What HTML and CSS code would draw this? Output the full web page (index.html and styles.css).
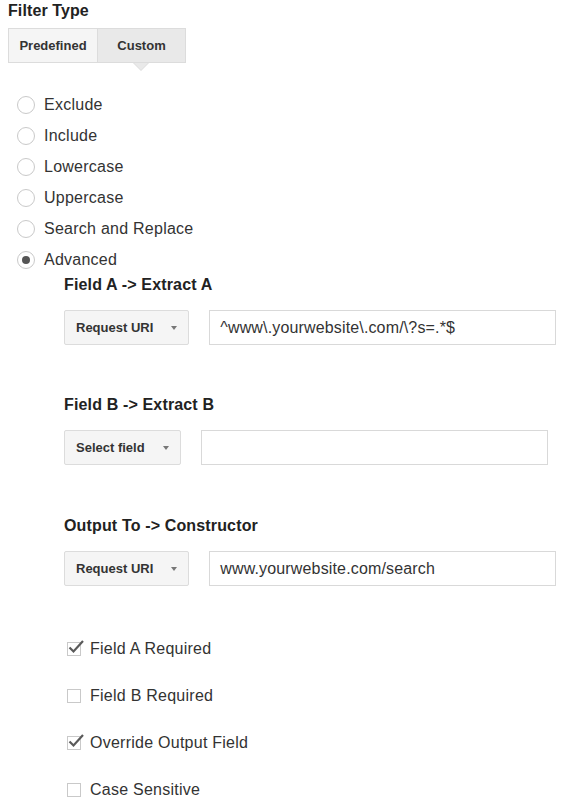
FILE: index.html
```html
<!DOCTYPE html>
<html>
<head>
<meta charset="utf-8">
<link rel="stylesheet" href="styles.css">
</head>
<body>
<div class="page">
  <div class="title">Filter Type</div>
  <div class="tabs">
    <div class="tab">Predefined</div>
    <div class="tab active">Custom</div>
  </div>
  <div class="radios">
    <div class="radio-row"><span class="radio"></span><span>Exclude</span></div>
    <div class="radio-row"><span class="radio"></span><span>Include</span></div>
    <div class="radio-row"><span class="radio"></span><span>Lowercase</span></div>
    <div class="radio-row"><span class="radio"></span><span>Uppercase</span></div>
    <div class="radio-row"><span class="radio"></span><span>Search and Replace</span></div>
    <div class="radio-row"><span class="radio checked"></span><span>Advanced</span></div>
  </div>
  <div class="advanced">
    <div class="heading">Field A -&gt; Extract A</div>
    <div class="field-row">
      <div class="select"><span>Request URI</span><span class="arrow"></span></div>
      <div class="input">^www\.yourwebsite\.com/\?s=.*$</div>
    </div>
    <div class="heading gap">Field B -&gt; Extract B</div>
    <div class="field-row">
      <div class="select"><span>Select field</span><span class="arrow"></span></div>
      <div class="input"></div>
    </div>
    <div class="heading gap gap-c">Output To -&gt; Constructor</div>
    <div class="field-row">
      <div class="select"><span>Request URI</span><span class="arrow"></span></div>
      <div class="input">www.yourwebsite.com/search</div>
    </div>
    <div class="checks">
      <div class="check-row"><span class="box"><svg class="tick" width="18" height="16" viewBox="0 0 18 16"><path d="M2.5 8.5 L6.5 12.5 L16 2" fill="none" stroke="#5a5a5a" stroke-width="2.2"/></svg></span><span>Field A Required</span></div>
      <div class="check-row"><span class="box"></span><span>Field B Required</span></div>
      <div class="check-row"><span class="box"><svg class="tick" width="18" height="16" viewBox="0 0 18 16"><path d="M2.5 8.5 L6.5 12.5 L16 2" fill="none" stroke="#5a5a5a" stroke-width="2.2"/></svg></span><span>Override Output Field</span></div>
      <div class="check-row"><span class="box"></span><span>Case Sensitive</span></div>
    </div>
  </div>
</div>
</body>
</html>
```
FILE: styles.css
```css
html, body {
  margin: 0;
  padding: 0;
  background: #fff;
}
.page {
  padding: 0 8px;
  font-family: "Liberation Sans", Arial, sans-serif;
  color: #333;
  font-size: 16px;
  letter-spacing: 0.25px;
}
.title {
  font-weight: bold;
  font-size: 16px;
  line-height: 22px;
  color: #222;
  letter-spacing: 0.1px;
}
.tabs {
  display: flex;
  margin-top: 6px;
  width: 178px;
}
.tab {
  height: 33px;
  line-height: 33px;
  font-size: 13px;
  font-weight: bold;
  color: #333;
  background: #f5f5f5;
  border: 1px solid #dcdcdc;
  text-align: center;
  width: 88px;
  letter-spacing: 0;
}
.tab:first-child {
  width: 89px;
}
.tab + .tab {
  border-left: none;
}
.tab.active {
  background: #e9e9e9;
  position: relative;
}
.tab.active::after {
  content: "";
  position: absolute;
  left: 36px;
  top: 34px;
  width: 0;
  height: 0;
  border-left: 7px solid transparent;
  border-right: 7px solid transparent;
  border-top: 7px solid #e9e9e9;
}
.tab.active::before {
  content: "";
  position: absolute;
  left: 35px;
  top: 34px;
  width: 0;
  height: 0;
  border-left: 8px solid transparent;
  border-right: 8px solid transparent;
  border-top: 8px solid #dcdcdc;
}
.radios {
  margin-top: 26px;
  display: flex;
  flex-direction: column;
}
.radio-row {
  height: 31px;
  display: flex;
  align-items: center;
}
.radio {
  width: 18px;
  height: 18px;
  border: 1px solid #c9c9c9;
  border-radius: 50%;
  margin-left: 9px;
  margin-right: 9px;
  box-sizing: border-box;
  display: flex;
  align-items: center;
  justify-content: center;
  flex: none;
}
.radio.checked::after {
  content: "";
  width: 8px;
  height: 8px;
  border-radius: 50%;
  background: #555;
}
.advanced {
  padding-left: 56px;
}
.heading {
  font-weight: bold;
  font-size: 16px;
  line-height: 20px;
  color: #222;
  letter-spacing: 0.15px;
}
.heading.gap {
  margin-top: 50px;
}
.heading.gap-c {
  margin-top: 51px;
}
.field-row {
  display: flex;
  margin-top: 15px;
  align-items: stretch;
}
.select {
  height: 35px;
  box-sizing: border-box;
  background: #f5f5f5;
  border: 1px solid #dcdcdc;
  border-radius: 2px;
  padding: 0 11px;
  display: flex;
  align-items: center;
  font-size: 13px;
  font-weight: bold;
  color: #333;
  letter-spacing: 0;
}
.arrow {
  width: 0;
  height: 0;
  margin-left: 18px;
  border-left: 3.5px solid transparent;
  border-right: 3.5px solid transparent;
  border-top: 4px solid #777;
}
.input {
  margin-left: 20px;
  width: 347px;
  height: 35px;
  box-sizing: border-box;
  border: 1px solid #d9d9d9;
  padding: 0 10px;
  display: flex;
  align-items: center;
  font-size: 16px;
  color: #333;
  letter-spacing: 0.15px;
}
.checks {
  margin-top: 39px;
  display: flex;
  flex-direction: column;
}
.check-row {
  height: 47px;
  display: flex;
  align-items: center;
}
.box {
  position: relative;
  width: 14px;
  height: 14px;
  box-sizing: border-box;
  border: 1px solid #c9c9c9;
  margin-left: 3px;
  margin-right: 9px;
  flex: none;
}
.tick {
  position: absolute;
  left: -1px;
  top: -4px;
}
```
